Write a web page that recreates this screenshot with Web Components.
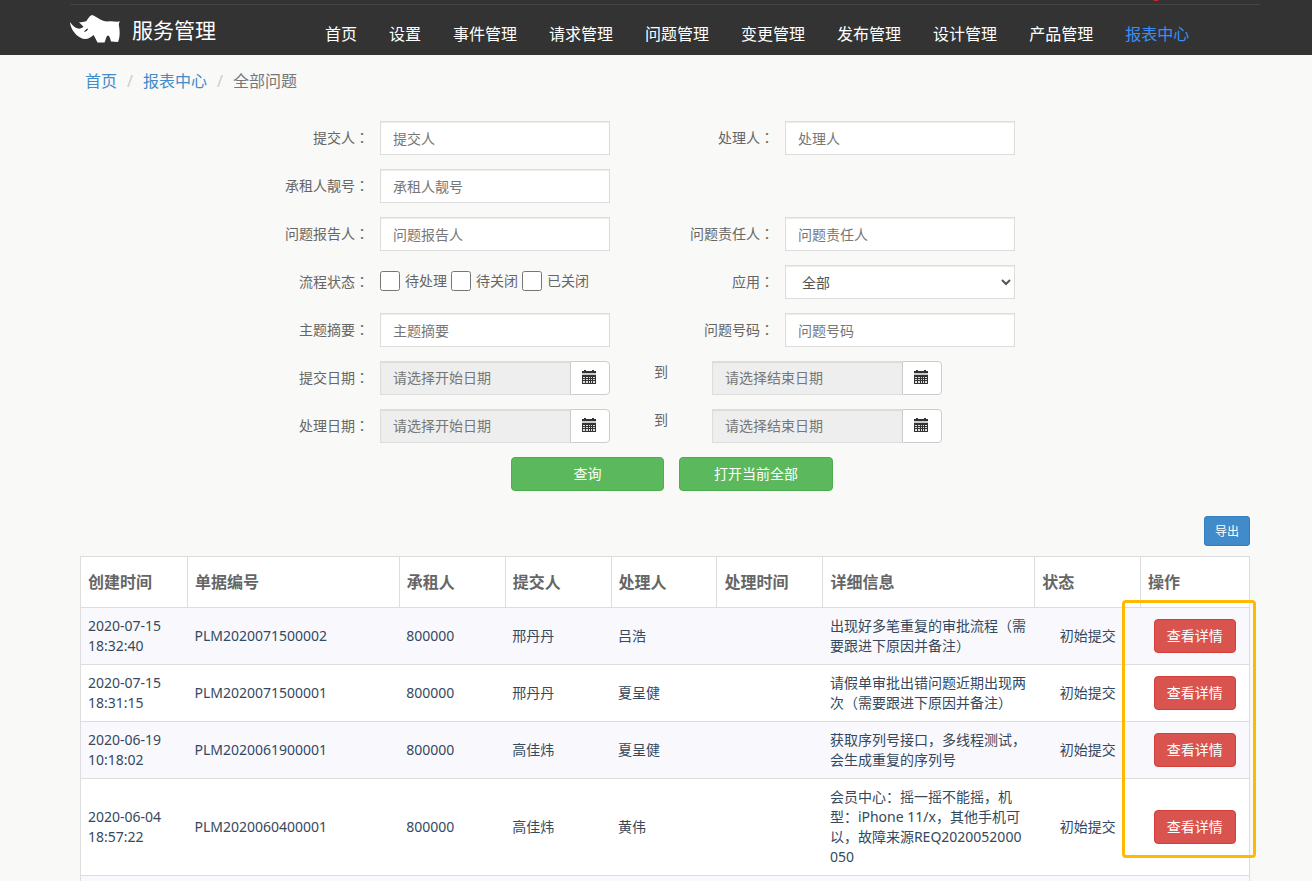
<!DOCTYPE html>
<html lang="zh-CN">
<head>
<meta charset="utf-8">
<meta name="viewport" content="width=device-width, initial-scale=1">
<title>服务管理 - 全部问题</title>
<style>
  body {
    margin: 0;
    background: #f9f9f7;
    color: #666;
    font: 14px/20px "Noto Sans", "Noto Sans CJK SC", sans-serif;
  }
</style>
</head>
<body>
<site-header></site-header>
<page-main>
  <bread-crumb slot="crumb"></bread-crumb>
  <filter-form></filter-form>
  <issue-table></issue-table>
</page-main>

<template id="site-header">
  <style>
    :host { display: block; background: #333; }
    header {
      position: relative; box-sizing: border-box; height: 55px;
      margin: 0 52px 0 70px; display: flex; padding-top: 4px;
    }
    .bar { flex: 1; display: flex; align-items: center; border-top: 1px solid #444; }
    .brand { display: flex; align-items: center; gap: 12px; width: 255px; color: #fff; text-decoration: none; font-size: 21px; line-height: 30px; }
    .brand svg { margin-bottom: 2px; }
    nav { display: flex; gap: 32px; padding-top: 8px; font-size: 16px; line-height: 24px; }
    nav a { color: #fff; text-decoration: none; white-space: nowrap; }
    nav a[aria-current] { color: #3b8ff3; }
    .dot { position: absolute; right: 98px; top: -11px; width: 12px; height: 12px; border-radius: 50%; background: #e2231a; }
    svg { display: block; }
  </style>
  <header>
    <div class="bar">
      <a class="brand" href="#">
        <svg width="50" height="28" viewBox="0 0 50 28" aria-hidden="true">
          <path fill="#fff" d="M0 7C2 10 5 13 8 13.500C10 14 12 13 13.500 12C12.500 10 10 9 9 7C12 7.500 14 7 16.500 6C18 4 19 1 22 0C24 .500 25 1.500 27 2.500C31 5 34 6.500 38 6.500C42 6 46 7 50 6.500C49 8 48.500 8.500 49 11C50 16 50 23 48 27L41 26.500C40 23 39.500 20.500 38 20.500C36 21 36 25 34.500 27.500L27.500 27.500C26 25 25 22 23.500 20C21 22 18 24.500 14 24C9 23 4 18 2 14C1 12 0 9 0 7Z"/>
          <path fill="#333" d="M14 17C14.500 15.500 16 14 18 13.500C18 15.500 16.500 16.500 14 17Z"/>
        </svg>
        <span>服务管理</span>
      </a>
      <nav>
        <a href="#">首页</a><a href="#">设置</a><a href="#">事件管理</a><a href="#">请求管理</a><a href="#">问题管理</a><a href="#">变更管理</a><a href="#">发布管理</a><a href="#">设计管理</a><a href="#">产品管理</a><a href="#" aria-current="page">报表中心</a>
      </nav>
    </div>
    <span class="dot"></span>
  </header>
</template>

<template id="page-main">
  <style>
    :host { display: block; }
    main { margin: 0 62px 0 80px; }
  </style>
  <main><slot name="crumb"></slot><slot></slot></main>
</template>

<template id="bread-crumb">
  <style>
    :host { display: block; padding: 14px 0 0 5px; font-size: 16px; line-height: 24px; }
    ol { margin: 0; padding: 0; display: flex; list-style: none; }
    li + li::before { content: "/"; display: inline-block; width: 26px; text-align: center; color: #ccc; }
    a { color: #428bca; text-decoration: none; }
    li { color: #777; }
  </style>
  <ol><li><a href="#">首页</a></li><li><a href="#">报表中心</a></li><li aria-current="page">全部问题</li></ol>
</template>

<template id="form-field">
  <style>
    :host { display: contents; }
    label { text-align: right; padding-right: 11px; line-height: 32px; }
    .colon { font-family: "Noto Sans CJK JP", sans-serif; }
    input {
      box-sizing: border-box; width: 100%; height: 34px; padding: 0 12px; border: 1px solid #ddd;
      box-shadow: inset 0 1px 1px rgba(0,0,0,.08); background: #fff; font: inherit; color: #555;
    }
    input::placeholder { color: #777; opacity: 1; }
  </style>
  <label for="c"><span class="t"></span><span class="colon" lang="ja">：</span></label>
  <input id="c" type="text">
</template>

<template id="date-field">
  <style>
    :host { display: flex; height: 34px; }
    input {
      box-sizing: border-box; flex: 1; min-width: 0; padding: 0 12px; border: 1px solid #ddd; border-right: 0;
      box-shadow: inset 0 1px 1px rgba(0,0,0,.08); background: #eee; font: inherit;
    }
    input::placeholder { color: #777; opacity: 1; }
    button {
      box-sizing: border-box; width: 40px; padding: 0 2px 2px 0; display: flex; align-items: center; justify-content: center;
      border: 1px solid #ccc; border-radius: 0 4px 4px 0; background: #fff; color: #333;
    }
  </style>
  <input type="text" readonly>
  <button type="button" aria-label="选择日期">
    <svg width="14" height="14" viewBox="0 0 14 14" shape-rendering="crispEdges" aria-hidden="true">
      <path fill="#333" d="M2 0h2v1h6V0h2v1h2v2H0V1h2zM0 5h14v9H0z"/>
      <path fill="#ccc" d="M0 3h14v2H0z"/>
      <path fill="#ddd" d="M1 7h2v1H1zM4 7h2v1H4zM7 7h1v1H7zM9 7h1v1H9zM11 7h2v1h-2zM1 9h2v1H1zM4 9h2v1H4zM7 9h1v1H7zM9 9h1v1H9zM11 9h2v1h-2zM1 11h2v2H1zM4 11h2v2H4zM7 11h1v2H7zM9 11h1v2H9zM11 11h2v2h-2z"/>
    </svg>
  </button>
</template>

<template id="filter-form">
  <style>
    :host { display: block; padding-top: 28px; }
    form { display: grid; gap: 14px; }
    .row {
      display: grid; height: 34px;
      grid-template-columns: minmax(0, 300fr) minmax(0, 230fr) minmax(0, 175fr) minmax(0, 230fr) minmax(0, 235fr);
    }
    .dates { grid-template-columns: minmax(0, 300fr) minmax(0, 230fr) minmax(0, 102fr) minmax(0, 230fr) minmax(0, 308fr); }
    .label { text-align: right; padding-right: 11px; line-height: 32px; }
    .colon { font-family: "Noto Sans CJK JP", sans-serif; }
    .checks { display: flex; align-items: center; gap: 4px; height: 32px; padding-bottom: 2px; white-space: nowrap; }
    .checks label { display: flex; align-items: center; gap: 5px; }
    .checks input { width: 20px; height: 20px; margin: 0; }
    .to { text-align: center; line-height: 22px; }
    select {
      box-sizing: border-box; height: 34px; padding: 0 12px; border: 1px solid #ddd; border-radius: 0;
      box-shadow: inset 0 1px 1px rgba(0,0,0,.08); background: #fff; color: #555; font: inherit;
    }
    .dates { column-gap: 0; }
    .actions { display: grid; grid-template-columns: 153fr 154fr; column-gap: 15px; height: 34px; margin: 0 417px 0 431px; }
    .actions button { border: 1px solid #4cae4c; border-radius: 4px; background: #5cb85c; color: #fff; font: inherit; padding: 0; }
  </style>
  <form>
    <div class="row"><form-field label="提交人"></form-field><form-field label="处理人"></form-field></div>
    <div class="row"><form-field label="承租人靓号"></form-field></div>
    <div class="row"><form-field label="问题报告人"></form-field><form-field label="问题责任人"></form-field></div>
    <div class="row">
      <span class="label" id="state">流程状态<span class="colon" lang="ja">：</span></span>
      <div class="checks" role="group" aria-labelledby="state">
        <label><input type="checkbox">待处理</label><label><input type="checkbox">待关闭</label><label><input type="checkbox">已关闭</label>
      </div>
      <label class="label" for="app">应用<span class="colon" lang="ja">：</span></label>
      <select id="app"><option>全部</option></select>
    </div>
    <div class="row"><form-field label="主题摘要"></form-field><form-field label="问题号码"></form-field></div>
    <div class="row dates">
      <span class="label">提交日期<span class="colon" lang="ja">：</span></span>
      <date-field label="提交日期开始" placeholder="请选择开始日期"></date-field><span class="to">到</span><date-field label="提交日期结束" placeholder="请选择结束日期"></date-field>
    </div>
    <div class="row dates">
      <span class="label">处理日期<span class="colon" lang="ja">：</span></span>
      <date-field label="处理日期开始" placeholder="请选择开始日期"></date-field><span class="to">到</span><date-field label="处理日期结束" placeholder="请选择结束日期"></date-field>
    </div>
    <div class="actions"><button type="button">查询</button><button type="button">打开当前全部</button></div>
  </form>
</template>

<template id="issue-table">
  <style>
    :host { display: block; padding-top: 25px; }
    .tools { display: flex; justify-content: flex-end; padding-bottom: 10px; }
    button { border: 1px solid #357ebd; border-radius: 3px; background: #428bca; color: #fff; font: inherit; cursor: pointer; }
    .export { width: 46px; height: 30px; padding: 2px 0 0; font-size: 12px; }
    .wrap { position: relative; }
    table { width: 100%; table-layout: fixed; border-collapse: collapse; border: 1px solid #ddd; border-bottom: 0; background: #fff; color: #34495e; }
    col { width: 9.06%; }
    col.first { width: 9.15%; }
    col.wide { width: 18.12%; }
    col.last { width: auto; }
    th { height: 51px; box-sizing: border-box; padding: 0 7px; border: 1px solid #ddd; text-align: left; color: #666; font-size: 16px; }
    td { padding: 8px 7px; border-bottom: 1px solid #ddd; vertical-align: middle; }
    td.detail { word-break: break-all; }
    tbody tr:nth-child(odd) { background: #f9f8fd; }
    td.c { text-align: center; }
    td button { width: 82px; height: 34px; padding: 0; border-color: #d43f3a; border-radius: 4px; background: #d9534f; vertical-align: middle; }
    td.next { height: 5px; padding: 0; border-bottom: 0; }
    .mark {
      position: absolute; top: 44px; right: -6px; width: 134px; height: 258px; box-sizing: border-box;
      border: 3px solid #ffb900; border-radius: 4px; pointer-events: none;
    }
  </style>
  <div class="tools"><button class="export" type="button">导出</button></div>
  <div class="wrap">
    <table>
      <colgroup><col class="first"><col class="wide"><col><col><col><col><col class="wide"><col><col class="last"></colgroup>
      <thead><tr><th>创建时间</th><th>单据编号</th><th>承租人</th><th>提交人</th><th>处理人</th><th>处理时间</th><th>详细信息</th><th>状态</th><th>操作</th></tr></thead>
      <tbody></tbody>
    </table>
    <div class="mark"></div>
  </div>
</template>

<script>
  class TemplateElement extends HTMLElement {
    constructor() {
      super();
      const template = document.getElementById(this.localName);
      this.attachShadow({ mode: 'open' }).append(template.content.cloneNode(true));
    }
  }

  class FormField extends TemplateElement {
    connectedCallback() {
      const label = this.getAttribute('label');
      this.shadowRoot.querySelector('.t').textContent = label;
      this.shadowRoot.querySelector('input').placeholder = label;
    }
  }

  class DateField extends TemplateElement {
    connectedCallback() {
      const input = this.shadowRoot.querySelector('input');
      input.placeholder = this.getAttribute('placeholder');
      input.setAttribute('aria-label', this.getAttribute('label'));
    }
  }

  const issues = [
    ['2020-07-15 18:32:40', 'PLM2020071500002', '800000', '邢丹丹', '吕浩', '', '出现好多笔重复的审批流程（需要跟进下原因并备注）', '初始提交'],
    ['2020-07-15 18:31:15', 'PLM2020071500001', '800000', '邢丹丹', '夏呈健', '', '请假单审批出错问题近期出现两次（需要跟进下原因并备注）', '初始提交'],
    ['2020-06-19 10:18:02', 'PLM2020061900001', '800000', '高佳炜', '夏呈健', '', '获取序列号接口，多线程测试，会生成重复的序列号', '初始提交'],
    ['2020-06-04 18:57:22', 'PLM2020060400001', '800000', '高佳炜', '黄伟', '', '会员中心：摇一摇不能摇，机型：iPhone 11/x，其他手机可以，故障来源REQ2020052000050', '初始提交'],
  ];

  class IssueTable extends TemplateElement {
    connectedCallback() {
      const body = this.shadowRoot.querySelector('tbody');
      for (const issue of issues) {
        const row = body.insertRow();
        issue.forEach((text, i) => {
          const cell = row.insertCell();
          cell.textContent = text;
          if (i === 6) cell.className = 'detail';
          if (i === 7) cell.className = 'c';
        });
        const action = row.insertCell();
        action.className = 'c';
        const button = document.createElement('button');
        button.type = 'button';
        button.textContent = '查看详情';
        action.append(button);
      }
      const next = body.insertRow().insertCell();
      next.colSpan = 9;
      next.className = 'next';
    }
  }

  customElements.define('site-header', class extends TemplateElement {});
  customElements.define('page-main', class extends TemplateElement {});
  customElements.define('bread-crumb', class extends TemplateElement {});
  customElements.define('form-field', FormField);
  customElements.define('date-field', DateField);
  customElements.define('filter-form', class extends TemplateElement {});
  customElements.define('issue-table', IssueTable);
</script>
</body>
</html>
